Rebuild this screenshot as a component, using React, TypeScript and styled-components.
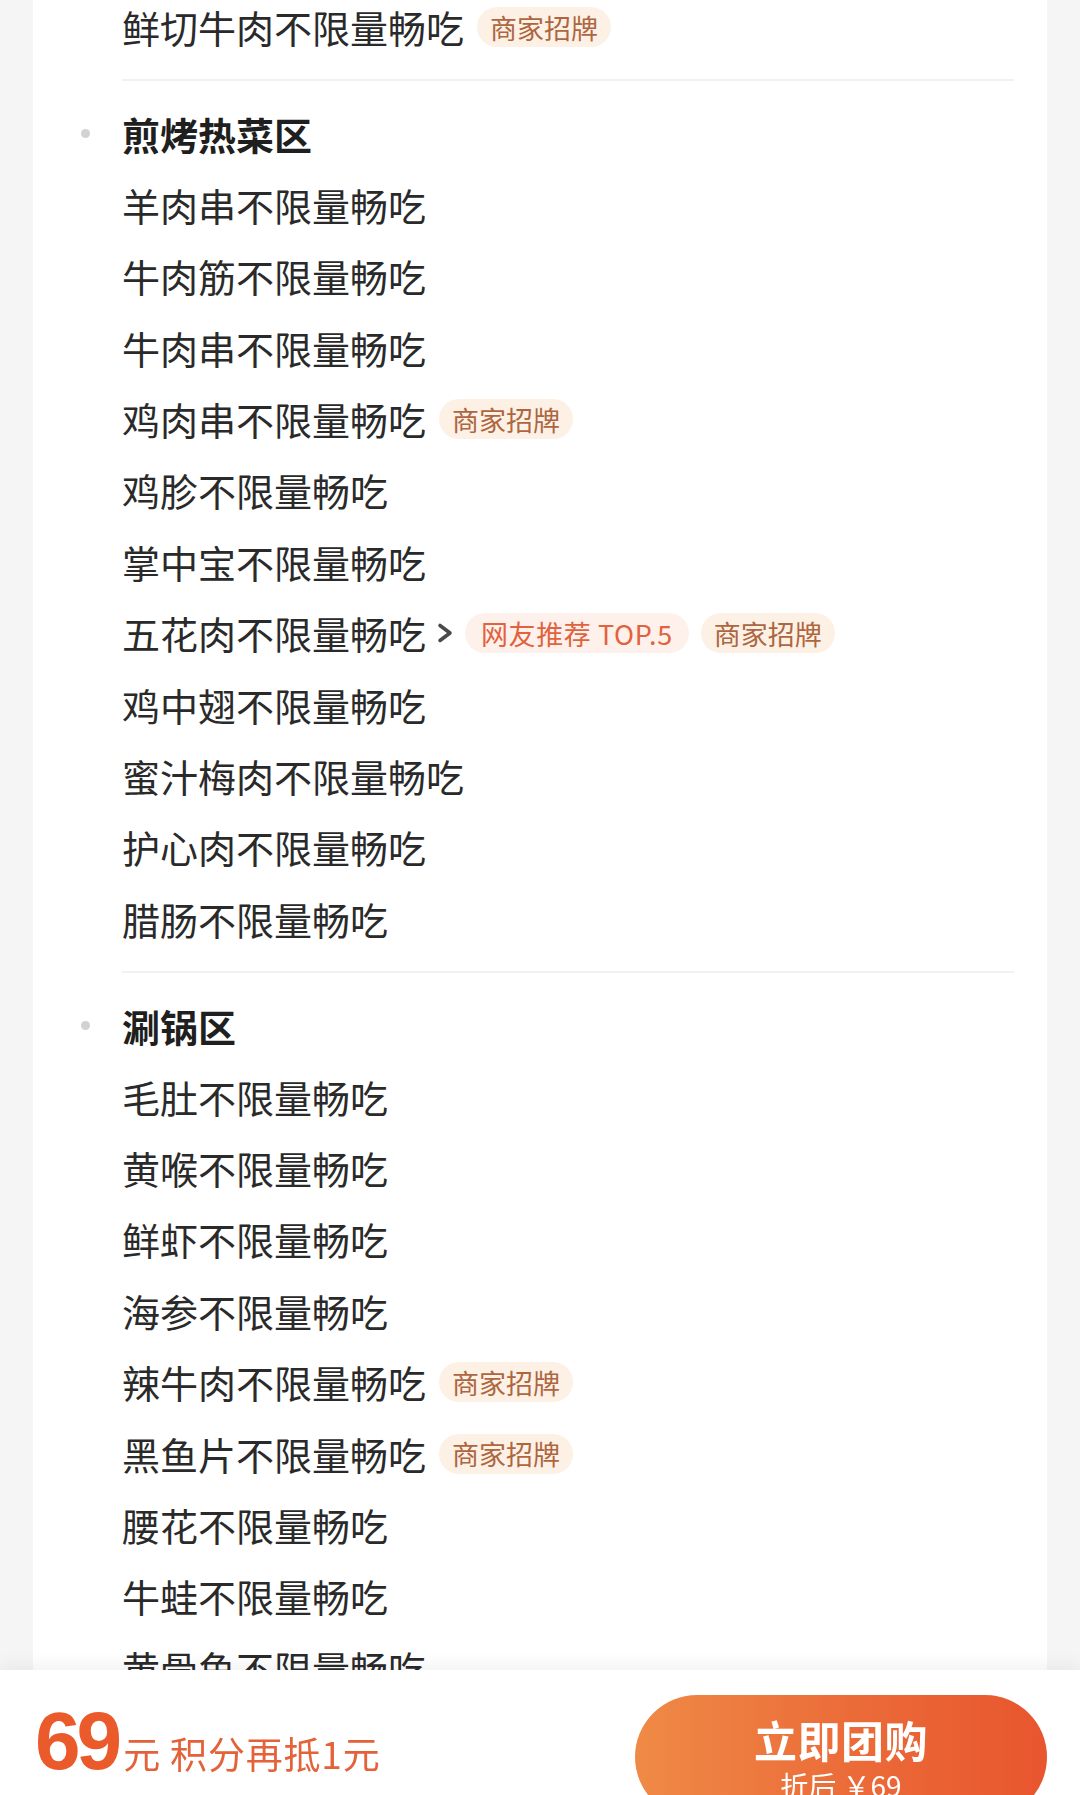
import React from "react";
import styled, { createGlobalStyle } from "styled-components";

const Global = createGlobalStyle`
  html, body {
    margin: 0;
    padding: 0;
    background: #f5f5f5;
    overflow: hidden;
    height: 100%;
  }
  body {
    font-family: "Noto Sans CJK SC", "Noto Sans", sans-serif;
  }
`;

const Page = styled.div`
  width: 1080px;
  height: 1795px;
  overflow: hidden;
  position: relative;
  background: #f5f5f5;
`;

const Card = styled.div`
  margin: -8.6px 33px 0;
  background: #ffffff;
  padding: 0 0 0 89px;
`;

const Section = styled.div<{ $first?: boolean }>`
  padding: ${(p) => (p.$first ? "0" : "16.5px")} 0 16.5px;
`;

const Divider = styled.div`
  height: 2px;
  background: #f1f1f1;
  margin-right: 33px;
`;

const Header = styled.div`
  height: 71.4px;
  display: flex;
  align-items: center;
  margin-left: -41.5px;
  gap: 32.5px;
  font-size: 38px;
  font-weight: 700;
  color: #1f1f1f;
`;

const Dot = styled.span`
  width: 9px;
  height: 9px;
  border-radius: 50%;
  background: #d2d2d2;
  flex: none;
`;

const Row = styled.div`
  height: 71.4px;
  display: flex;
  align-items: center;
  font-size: 38px;
  color: #2a2a2a;
  white-space: nowrap;
`;

const Name = styled.span`
  line-height: 1;
`;

const Chevron = styled.svg`
  width: 17px;
  height: 22px;
  margin-left: 11px;
  flex: none;
`;

const Tags = styled.div<{ $afterChevron?: boolean }>`
  display: flex;
  gap: 12px;
  margin-left: ${(p) => (p.$afterChevron ? "11px" : "13px")};
`;

const Tag = styled.span<{ $kind: "hot" | "sign" }>`
  height: 40px;
  border-radius: 20px;
  padding: 0 ${(p) => (p.$kind === "hot" ? "16px" : "13px")};
  display: inline-flex;
  align-items: center;
  font-size: 27px;
  line-height: 1;
  background: ${(p) => (p.$kind === "hot" ? "#fef1ec" : "#fdf1e6")};
  color: ${(p) => (p.$kind === "hot" ? "#e1623c" : "#ad6640")};
  letter-spacing: ${(p) => (p.$kind === "hot" ? "0.6px" : "0")};
`;

const Bar = styled.div`
  position: fixed;
  left: 0;
  right: 0;
  bottom: 0;
  height: 125px;
  background: #ffffff;
  box-shadow: 0 -6px 16px rgba(0, 0, 0, 0.05);
  display: flex;
  justify-content: space-between;
  align-items: flex-start;
  padding: 0 33px 0 35px;
  overflow: hidden;
`;

const PriceGroup = styled.div`
  display: flex;
  align-items: baseline;
  margin-top: 31px;
`;

const Price = styled.span`
  font-family: "Liberation Sans", "Noto Sans", sans-serif;
  font-weight: 700;
  font-size: 82px;
  line-height: 80px;
  letter-spacing: -4px;
  color: #ea5a2b;
`;

const PriceNote = styled.span`
  margin-left: 5px;
  font-size: 37px;
  letter-spacing: 0.8px;
  color: #e3623a;
  white-space: pre;
`;

const BuyButton = styled.div`
  margin-top: 25px;
  width: 412px;
  height: 124px;
  border-radius: 62px;
  background: linear-gradient(90deg, #ef8a46 0%, #eb6a38 55%, #e8552e 100%);
  display: flex;
  flex-direction: column;
  align-items: center;
  padding-top: 19px;
  box-sizing: border-box;
  color: #ffffff;
`;

const BuyTitle = styled.span`
  font-size: 43px;
  font-weight: 700;
  line-height: 50px;
  letter-spacing: 0.5px;
`;

const BuySub = styled.span`
  font-size: 28px;
  line-height: 34px;
  margin-top: 4px;
`;

type Item = { name: string; chevron?: boolean; tags?: { kind: "hot" | "sign"; text: string }[] };

const sign = { kind: "sign" as const, text: "商家招牌" };

const sections: { title?: string; items: Item[] }[] = [
  { items: [{ name: "鲜切牛肉不限量畅吃", tags: [sign] }] },
  {
    title: "煎烤热菜区",
    items: [
      { name: "羊肉串不限量畅吃" },
      { name: "牛肉筋不限量畅吃" },
      { name: "牛肉串不限量畅吃" },
      { name: "鸡肉串不限量畅吃", tags: [sign] },
      { name: "鸡胗不限量畅吃" },
      { name: "掌中宝不限量畅吃" },
      {
        name: "五花肉不限量畅吃",
        chevron: true,
        tags: [{ kind: "hot", text: "网友推荐 TOP.5" }, sign],
      },
      { name: "鸡中翅不限量畅吃" },
      { name: "蜜汁梅肉不限量畅吃" },
      { name: "护心肉不限量畅吃" },
      { name: "腊肠不限量畅吃" },
    ],
  },
  {
    title: "涮锅区",
    items: [
      { name: "毛肚不限量畅吃" },
      { name: "黄喉不限量畅吃" },
      { name: "鲜虾不限量畅吃" },
      { name: "海参不限量畅吃" },
      { name: "辣牛肉不限量畅吃", tags: [sign] },
      { name: "黑鱼片不限量畅吃", tags: [sign] },
      { name: "腰花不限量畅吃" },
      { name: "牛蛙不限量畅吃" },
      { name: "黄骨鱼不限量畅吃" },
      { name: "鸭血不限量畅吃" },
    ],
  },
];

export default function App() {
  return (
    <Page>
      <Global />
      <Card>
        {sections.map((s, si) => (
          <React.Fragment key={si}>
            {si > 0 && <Divider />}
            <Section $first={si === 0}>
              {s.title && (
                <Header>
                  <Dot />
                  <span>{s.title}</span>
                </Header>
              )}
              {s.items.map((it) => (
                <Row key={it.name}>
                  <Name>{it.name}</Name>
                  {it.chevron && (
                    <Chevron viewBox="0 0 17 22">
                      <polyline
                        points="3,3.5 13,11 3,18.5"
                        fill="none"
                        stroke="#4a4a4a"
                        strokeWidth="3.6"
                        strokeLinecap="round"
                        strokeLinejoin="round"
                      />
                    </Chevron>
                  )}
                  {it.tags && (
                    <Tags $afterChevron={it.chevron}>
                      {it.tags.map((t) => (
                        <Tag key={t.text} $kind={t.kind}>
                          {t.text}
                        </Tag>
                      ))}
                    </Tags>
                  )}
                </Row>
              ))}
            </Section>
          </React.Fragment>
        ))}
      </Card>
      <Bar>
        <PriceGroup>
          <Price>69</Price>
          <PriceNote>元 积分再抵1元</PriceNote>
        </PriceGroup>
        <BuyButton>
          <BuyTitle>立即团购</BuyTitle>
          <BuySub>折后 ￥69</BuySub>
        </BuyButton>
      </Bar>
    </Page>
  );
}
